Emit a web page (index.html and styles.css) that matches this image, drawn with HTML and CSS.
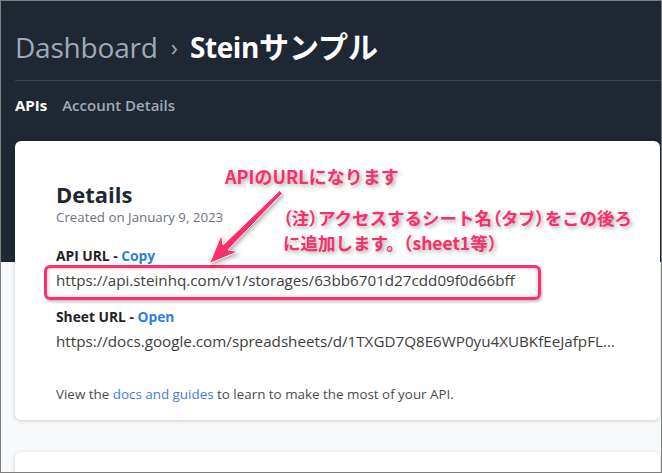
FILE: index.html
```html
<!DOCTYPE html>
<html lang="ja">
<head>
  <meta charset="UTF-8">
  <meta name="viewport" content="width=device-width, initial-scale=1.0">
  <title>Steinサンプル - Dashboard</title>
  <link rel="stylesheet" href="styles.css">
</head>
<body>
  <div class="frame">
    <header class="top">
      <h1 class="crumbs">
        <span class="crumb-link">Dashboard</span>
        <span class="crumb-sep">›</span>
        <span class="crumb-current">Stein<span class="jp">サンプル</span></span>
      </h1>
      <nav class="tabs">
        <a class="tab tab-active" href="#">APIs</a>
        <a class="tab" href="#">Account Details</a>
      </nav>
    </header>

    <main class="content">
      <section class="card">
        <h2 class="card-title">Details</h2>
        <p class="card-date">Created on January 9, 2023</p>

        <div class="field">
          <div class="field-label">API URL - <a href="#">Copy</a></div>
          <div class="field-value">https://api.steinhq.com/v1/storages/63bb6701d27cdd09f0d66bff</div>
        </div>

        <div class="field">
          <div class="field-label">Sheet URL - <a href="#">Open</a></div>
          <div class="field-value">https://docs.google.com/spreadsheets/d/1TXGD7Q8E6WP0yu4XUBKfEeJafpFLxQ2nZ8vRk</div>
        </div>

        <p class="card-foot">View the <a href="#">docs and guides</a> to learn to make the most of your API.</p>
      </section>
      <section class="card card-next"></section>
    </main>

    <!-- annotations drawn over the screenshot -->
    <div class="mark-box"></div>
    <svg class="mark-arrow" width="662" height="473" viewBox="0 0 662 473">
      <polygon points="279.6,190.6 282.4,193.4 228.1,249.9 238.2,251.6 209.5,263.5 221.4,234.8 223.1,244.9" />
    </svg>
    <div class="note note-main">APIのURLになります</div>
    <div class="note note-sub"><span class="tight">（</span>注<span class="tight">）</span>アクセスするシート名<span class="tight">（</span>タブ<span class="tight">）</span>をこの後ろ<br>に追加します。（sheet1等）</div>
  </div>
</body>
</html>
```

FILE: styles.css
```css
body {
  margin: 0;
  font-family: "Open Sans", "Noto Sans CJK JP", sans-serif;
  overflow: hidden;
}

.frame {
  position: relative;
  width: 662px;
  height: 473px;
  box-sizing: border-box;
  border: 1px solid #7f7f7f;
  background: linear-gradient(#1f2732 0, #1f2732 261px, #f8f9fa 261px);
  overflow: hidden;
}

.top {
  padding-left: 14px;
}

.crumbs {
  margin: 0;
  height: 80px;
  box-sizing: border-box;
  padding-top: 28px;
  display: flex;
  align-items: baseline;
  font-size: 28px;
  font-weight: 400;
  border-bottom: 1px solid #3a4350;
  line-height: 36px;
}

.crumb-link {
  color: #a0aab6;
  letter-spacing: -0.2px;
}

.crumb-sep {
  color: #a0aab6;
  font-size: 24px;
  margin: 0 12px 0 13px;
  position: relative;
  top: -2px;
}

.crumb-current {
  color: #ffffff;
  font-weight: 700;
  letter-spacing: -0.4px;
}

.crumb-current .jp {
  font-size: 30px;
  letter-spacing: 0;
}

.tabs {
  display: flex;
  gap: 15px;
  padding-top: 13px;
  height: 60px;
  box-sizing: border-box;
}

.tab {
  font-size: 15px;
  font-weight: 600;
  color: #a0aab6;
  text-decoration: none;
  line-height: 22px;
}

.tab-active {
  color: #ffffff;
  font-weight: 700;
}

.content {
  padding: 0 1px 0 14px;
}

.card {
  background: #ffffff;
  border-radius: 6px;
  box-shadow: 0 1px 4px rgba(0, 0, 0, 0.18);
  padding: 40px 40px 0 41px;
  height: 279px;
  box-sizing: border-box;
}

.card-next {
  margin-top: 32px;
  height: 40px;
}

.card-title {
  margin: 0;
  font-size: 22px;
  font-weight: 700;
  color: #1f2732;
  line-height: 26px;
}

.card-date {
  margin: 0 0 17px;
  font-size: 13.3px;
  color: #6b7280;
  line-height: 20px;
}

.field {
  margin-bottom: 13px;
}

.field-label {
  font-size: 13.8px;
  font-weight: 700;
  color: #222;
  line-height: 24px;
}

.field-label a {
  color: #2f7fe0;
  text-decoration: none;
}

.field-value {
  font-size: 15.2px;
  color: #3d3d3d;
  line-height: 24px;
  white-space: nowrap;
  overflow: hidden;
  text-overflow: ellipsis;
}

.card-foot {
  margin: 31px 0 0;
  font-size: 13.4px;
  color: #4b4b4b;
  line-height: 20px;
}

.card-foot a {
  color: #3b7ddd;
  text-decoration: none;
}

/* annotation layer */
.mark-box {
  position: absolute;
  left: 43px;
  top: 264px;
  width: 497px;
  height: 35px;
  box-sizing: border-box;
  border: 3px solid #fb2f6c;
  border-radius: 6px;
  box-shadow: inset 0 0 4px rgba(0, 0, 0, 0.25), 1px 2px 3px rgba(0, 0, 0, 0.25);
}

.mark-arrow {
  position: absolute;
  left: -1px;
  top: -1px;
  filter: drop-shadow(1px 2px 2px rgba(0, 0, 0, 0.35));
}

.mark-arrow polygon {
  fill: #fb2f6c;
  stroke: #ffffff;
  stroke-width: 1;
  stroke-linejoin: round;
}

.note {
  position: absolute;
  font-family: "Noto Sans CJK JP", sans-serif;
  font-weight: 700;
  color: #f7306b;
  -webkit-text-stroke: 4px #ffffff;
  paint-order: stroke fill;
  text-shadow: 2px 2px 4px rgba(0, 0, 0, 0.35);
  white-space: nowrap;
}

.note-main {
  left: 224px;
  top: 162px;
  font-size: 18px;
  line-height: 26px;
}

.note-sub {
  left: 282px;
  top: 204px;
  font-size: 17.5px;
  line-height: 25px;
}

.note-sub .tight {
  font-feature-settings: "palt";
}
```
